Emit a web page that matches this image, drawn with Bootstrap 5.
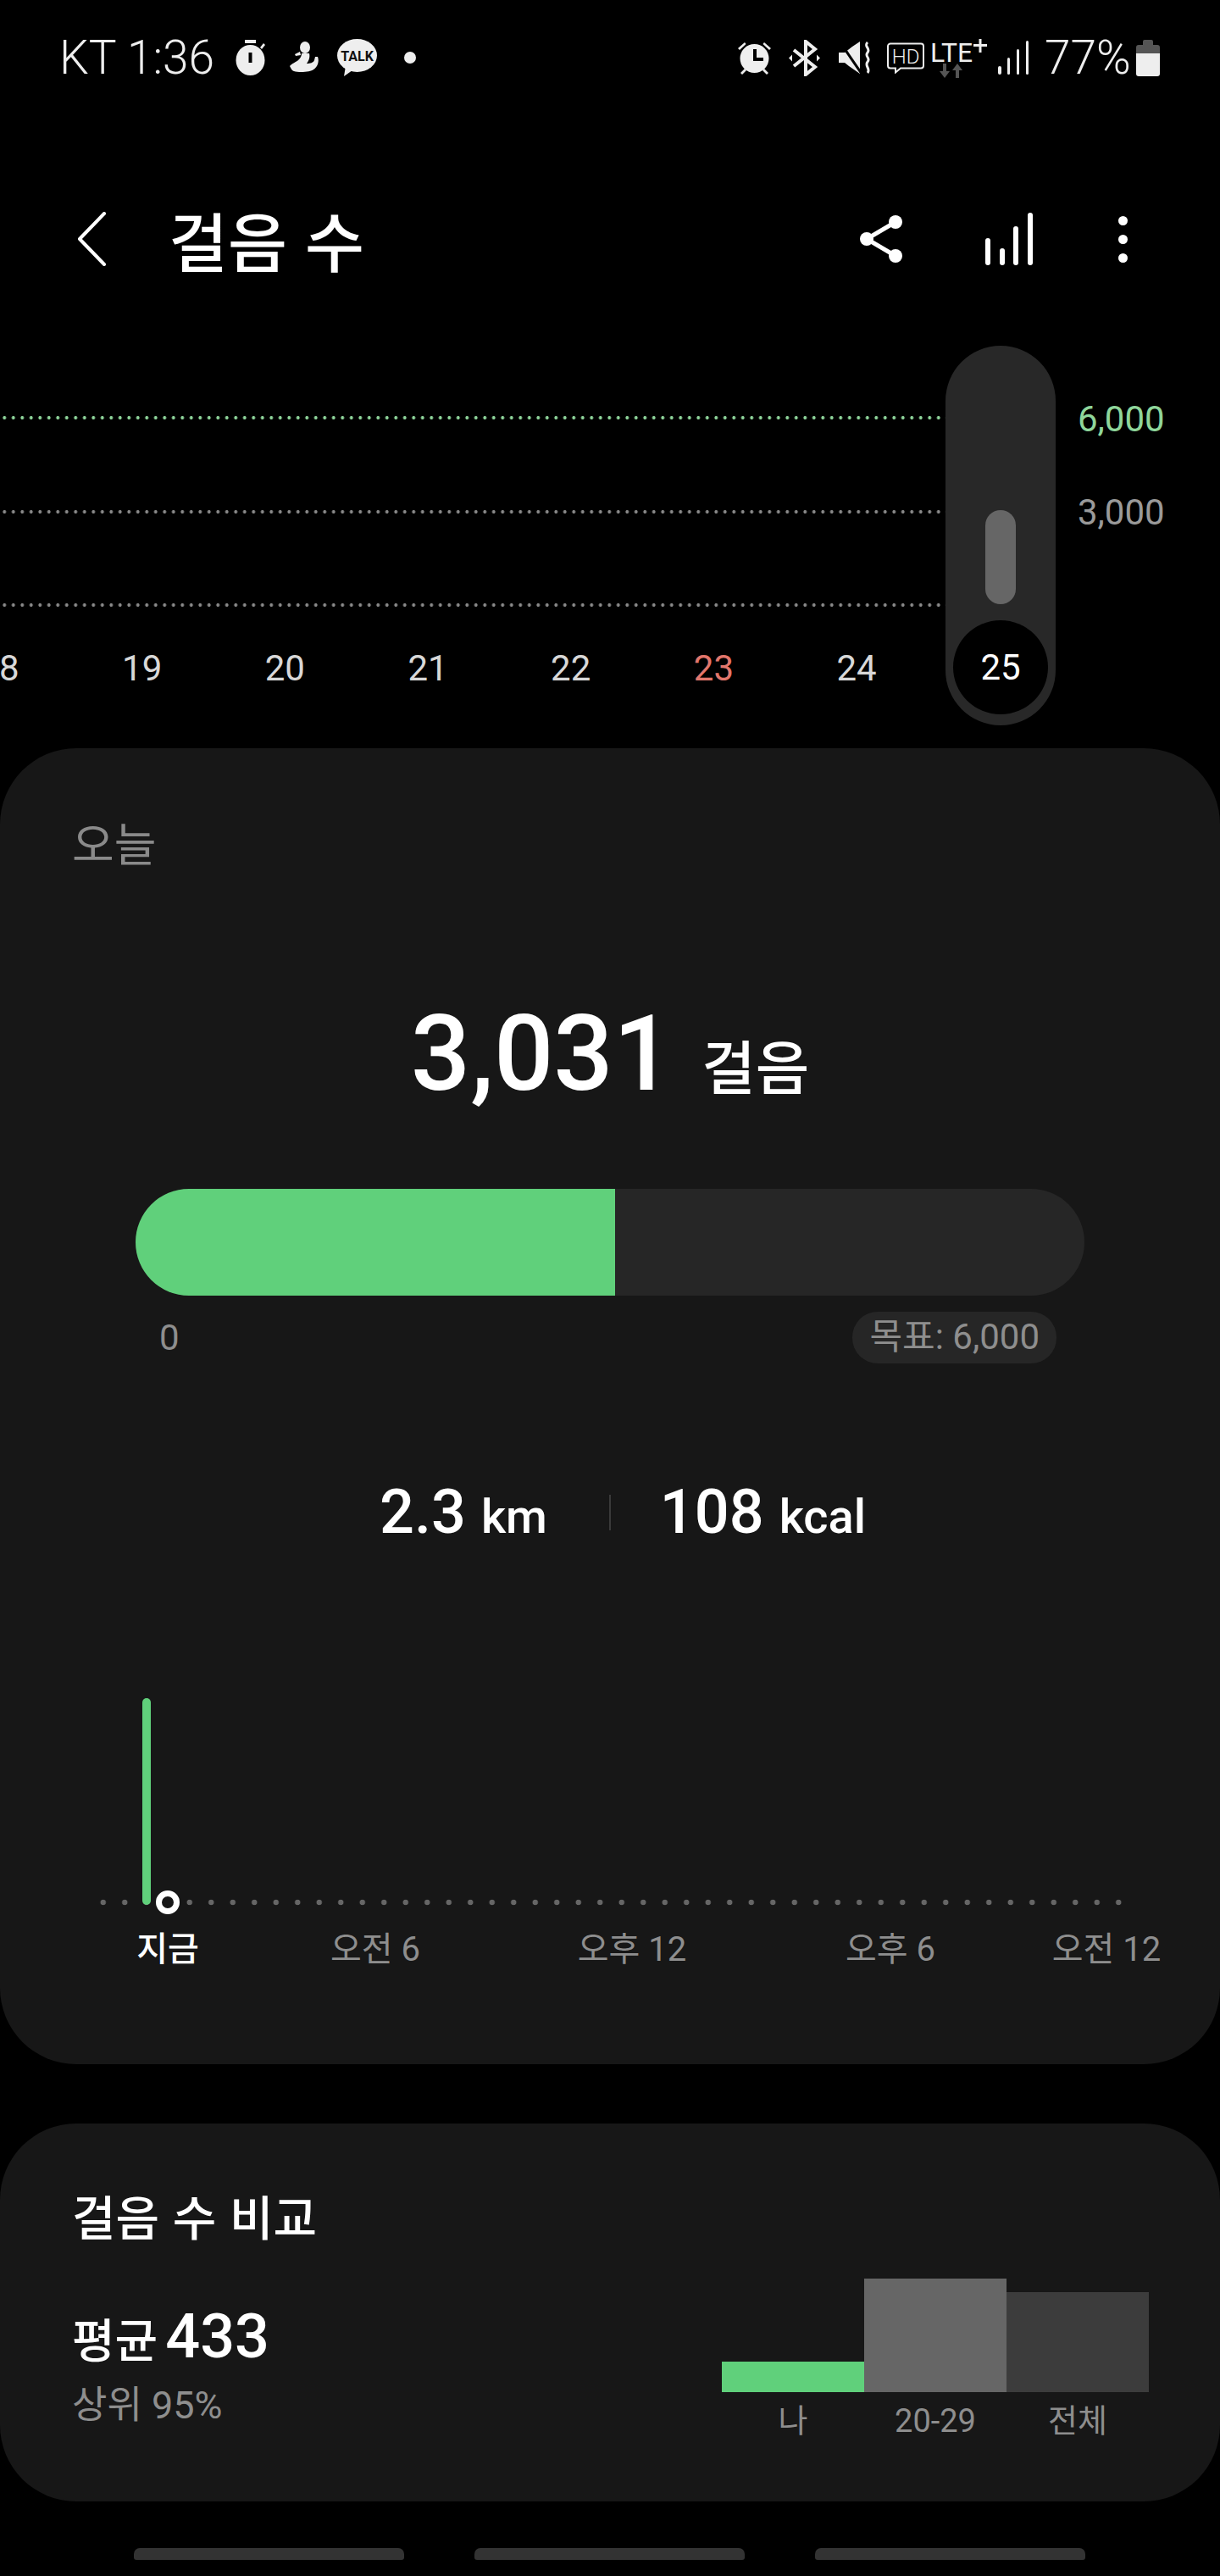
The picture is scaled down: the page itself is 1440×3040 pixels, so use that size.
<!DOCTYPE html>
<html lang="ko">

<head>
    <meta charset="UTF-8">
    <meta name="viewport" content="width=device-width, initial-scale=1.0">
    <title>걸음 수</title>
    <link href="https://cdn.jsdelivr.net/npm/bootstrap@5.3.3/dist/css/bootstrap.min.css" rel="stylesheet">
    <style>
        body {
            width: 1440px;
            height: 3040px;
            overflow: hidden;
            background: #000;
            color: #fff;
            font-family: Roboto, "Noto Sans CJK KR", sans-serif;
        }

        .kr {
            font-family: "Noto Sans CJK KR", Roboto, sans-serif;
        }

        /* status bar */
        .status-bar {
            height: 48px;
            margin-top: 44px;
            padding-left: 70px;
            color: #eee;
            font-weight: 300;
            font-size: 55px;
            line-height: 48px;
        }

        .status-time {
            width: 181px;
            white-space: nowrap;
        }

        .status-pct {
            width: 100px;
            margin-left: 18px;
            white-space: nowrap;
        }

        .ml-stop { margin-left: 27px; }
        .ml-person { margin-left: 28px; }
        .ml-talk { margin-left: 22px; }
        .ml-dot { margin-left: 32px; }
        .ml-alarm { margin-left: 379px; }
        .ml-bt { margin-left: 20px; }
        .ml-mute { margin-left: 22px; }
        .ml-hd { margin-left: 18px; }
        .ml-lte { margin-left: 7px; }
        .ml-signal { margin-left: 12px; }
        .ml-batt { margin-left: 8px; }

        /* app bar */
        .app-bar {
            height: 100px;
            margin-top: 140px;
            padding-left: 92px;
        }

        .app-title {
            margin-left: 74px;
            width: 816px;
            font-size: 76px;
            font-weight: 500;
            line-height: 100px;
            white-space: nowrap;
        }

        .ml-bars { margin-left: 98px; }
        .ml-more { margin-left: 101px; }

        /* week chart */
        .week-chart {
            height: 551px;
            padding-top: 141px;
        }

        .goal-row {
            height: 40px;
            margin-bottom: 70.5px;
        }

        .dot-line {
            width: 1116px;
            height: 4px;
            background: radial-gradient(circle, #8a8a8a 1.7px, transparent 2.2px) 0 0 / 10.5px 4px repeat-x;
        }

        .dot-line.is-goal {
            background-image: radial-gradient(circle, #8fd69b 1.7px, transparent 2.2px);
        }

        .axis-label {
            margin-left: 156px;
            padding-top: 3px;
            font-size: 42px;
            line-height: 40px;
            color: #9a9a9a;
        }

        .axis-label.is-goal {
            color: #8fd69b;
        }

        .day-row {
            margin-left: -85.4px;
            margin-top: -41px;
            font-size: 42px;
            line-height: 50px;
            color: #d8d8d8;
        }

        .day-cell {
            width: 168.7px;
            flex: none;
            text-align: center;
        }

        .day-red {
            color: #e2766c;
        }

        .day-pill {
            position: absolute;
            left: 1116px;
            top: 76px;
            width: 130px;
            height: 448px;
            padding-bottom: 13px;
            background: #282828;
            border-radius: 65px;
        }

        .day-pill-bar {
            width: 36px;
            height: 111px;
            background: #666;
            border-radius: 18px;
        }

        .day-pill-today {
            width: 112px;
            height: 111px;
            margin-top: 19px;
            background: #000;
            border-radius: 50%;
            font-size: 42px;
            line-height: 111px;
            text-align: center;
        }

        /* cards */
        .panel-card {
            background: #171717;
            border-radius: 90px;
        }

        .today-card {
            height: 1553px;
        }

        .compare-card {
            height: 446px;
            margin-top: 70px;
        }

        .today-label {
            padding: 81px 0 0 85px;
            font-size: 54px;
            line-height: 60px;
            color: #8a8a8a;
        }

        .total-row {
            height: 140px;
            margin-top: 150px;
            line-height: 140px;
        }

        .total-num {
            font-size: 124px;
            font-weight: 500;
        }

        .total-unit {
            margin-left: 34px;
            font-size: 69px;
            font-weight: 500;
        }

        .goal-track {
            height: 126px;
            margin: 89px 160px 0;
            border-radius: 63px;
            background: #262626;
            overflow: hidden;
        }

        .goal-fill {
            height: 100%;
            background: #60d07b;
        }

        .goal-meta {
            margin-top: 18px;
            padding: 0 193px 0 188px;
            color: #8e8e8e;
            font-size: 42px;
        }

        .goal-pill {
            height: 61px;
            padding: 0 20px;
            background: #262626;
            border-radius: 30px;
            line-height: 60px;
        }

        .stat-row {
            margin-top: 140px;
            height: 70px;
            padding-left: 30px;
            line-height: 70px;
            font-weight: 500;
        }

        .stat-num {
            font-size: 72px;
        }

        .stat-unit {
            margin-left: 18px;
            font-size: 56px;
        }

        .stat-sep {
            width: 2px;
            height: 42px;
            margin: 0 58px 0 73px;
            background: #3a3a3a;
            align-self: center;
        }

        .hour-chart {
            position: relative;
            height: 14px;
            margin: 418px 109px 0;
            background: radial-gradient(circle, #666 3px, transparent 3.6px) 0 0 / 25.5px 14px repeat-x;
        }

        .hour-bar {
            position: absolute;
            left: 59px;
            top: -234px;
            width: 10px;
            height: 244px;
            background: #60d07b;
            border-radius: 5px;
        }

        .hour-now {
            position: absolute;
            left: 75px;
            top: -7px;
            width: 28px;
            height: 28px;
            border: 7px solid #fff;
            border-radius: 50%;
            background: #171717;
        }

        .hour-labels {
            display: grid;
            grid-template-columns: 160px 330px 276px 334px 176px;
            margin: 20px 0 0 118px;
            color: #8e8e8e;
            font-size: 40px;
            line-height: 58px;
            text-align: center;
            white-space: nowrap;
        }

        .hour-labels .is-now {
            color: #fff;
            font-weight: 500;
        }

        .compare-title {
            padding: 72px 0 0 85px;
            font-size: 56px;
            font-weight: 500;
            line-height: 72px;
        }

        .compare-body {
            padding: 0 84px 0 85px;
        }

        .avg-row {
            margin-top: 68px;
            line-height: 80px;
            font-weight: 500;
        }

        .avg-label {
            font-size: 55px;
        }

        .avg-num {
            margin-left: 9px;
            font-size: 72px;
        }

        .rank-text {
            margin-top: 8px;
            color: #8e8e8e;
            font-size: 45px;
            line-height: 56px;
        }

        .bar-cols {
            margin-top: 39px;
            height: 134px;
        }

        .bar-col {
            width: 168px;
            height: 100%;
        }

        .bar-me { height: 36px; background: #60d07b; }
        .bar-age { height: 134px; background: #666; }
        .bar-all { height: 118px; background: #3c3c3c; }

        .bar-names {
            margin-top: 11px;
            color: #8e8e8e;
            font-size: 38px;
            line-height: 46px;
        }

        .bar-names div {
            width: 168px;
            text-align: center;
        }

        /* bottom handles */
        .nav-handles {
            margin-top: 55px;
            padding-left: 158px;
            gap: 83px;
        }

        .nav-handle {
            width: 319px;
            height: 14px;
            background: #333;
            border-radius: 7px 7px 3px 3px;
        }
    </style>
</head>

<body>
    <div class="status-bar d-flex align-items-center">
        <div class="status-time">KT 1:36</div>
        <svg class="ml-stop" width="35" height="42" viewBox="0 0 35 42" fill="#eee">
            <rect x="11" y="0" width="13" height="4" />
            <ellipse cx="17.5" cy="24" rx="17" ry="18" />
            <path d="M29 9l4-5 2 2-4 5z" />
            <rect x="15.5" y="15" width="4" height="12" fill="#000" />
        </svg>
        <svg class="ml-person" width="35" height="39" viewBox="0 0 35 39" fill="#eee">
            <ellipse cx="19" cy="7" rx="6" ry="7" />
            <path d="M13 12l-6 3 1 2 6-1zM15 14h9c1 4 0 8-3 12 4 0 8-1 9-4l1-4h3c2 5 0 12-5 15-3 3-17 4-23 2-2 0-4-4-5-6 2-3 8-5 10-7 3-3 4-5 4-8z" />
        </svg>
        <svg class="ml-talk" width="47" height="44" viewBox="0 0 47 44">
            <ellipse cx="23.5" cy="19.5" rx="23.5" ry="19.5" fill="#eee" />
            <path d="M8 44l2-12 8 5z" fill="#eee" />
            <text x="23.5" y="26" text-anchor="middle" font-family="Roboto, sans-serif" font-size="16" font-weight="700" fill="#111">TALK</text>
        </svg>
        <svg class="ml-dot" width="14" height="14" viewBox="0 0 14 14">
            <circle cx="7" cy="7" r="7" fill="#eee" />
        </svg>
        <svg class="ml-alarm" width="41" height="40" viewBox="0 0 41 40" fill="#eee">
            <circle cx="20.5" cy="21" r="17" />
            <path d="M1 9l8-7 1.500 2-7.500 7zM40 9l-8-7-1.500 2 7.500 7zM4 38l5-5 2 2-5 5zM37 38l-5-5-2 2 5 5z" />
            <path d="M19 10h4v10h8v4H19z" fill="#000" />
        </svg>
        <svg class="ml-bt" width="37" height="43" viewBox="0 0 37 43" fill="none" stroke="#eee" stroke-width="4">
            <path d="M6 12l25 20-11 9V2l11 9L6 31" />
            <path d="M0 21.500l4-4v8zM37 21.500l-4-4v8z" fill="#eee" stroke="none" />
        </svg>
        <svg class="ml-mute" width="39" height="38" viewBox="0 0 39 38">
            <path d="M0 13h7l9-7 9-6v38l-13-9-5-4H0z" fill="#eee" />
            <path d="M1 0l26 38" stroke="#000" stroke-width="3" />
            <path d="M34 1c-5 5 4 7 0 12s4 6 0 11 4 8 0 13" fill="none" stroke="#eee" stroke-width="3" />
        </svg>
        <svg class="ml-hd" width="44" height="37" viewBox="0 0 44 37">
            <path d="M4 1.500h36a3 3 0 0 1 3 3v23a3 3 0 0 1-3 3H16l-6 5v-5H4a3 3 0 0 1-3-3v-23a3 3 0 0 1 3-3z" fill="none" stroke="#eee" stroke-width="2" />
            <text x="22" y="25" text-anchor="middle" font-family="Roboto, sans-serif" font-size="24" fill="#eee">HD</text>
        </svg>
        <svg class="ml-lte" width="68" height="47" viewBox="0 0 68 47">
            <text x="0" y="28" font-family="Roboto, sans-serif" font-size="31" font-weight="400" fill="#eee" textLength="50" lengthAdjust="spacingAndGlyphs">LTE</text>
            <path d="M51 8.500h16M59 1v16" stroke="#eee" stroke-width="3" />
            <path d="M15 30h4v9h4l-6 8-6-8h4zM30 47h4v-9h4l-6-8-6 8h4z" fill="#555" />
        </svg>
        <svg class="ml-signal" width="37" height="40" viewBox="0 0 37 40" fill="#eee">
            <rect x="0" y="30" width="4" height="10" rx="2" />
            <rect x="11" y="20" width="3" height="20" rx="1.500" />
            <rect x="22" y="10" width="3" height="30" rx="1.500" />
            <rect x="33" y="0" width="3" height="40" rx="1.500" />
        </svg>
        <div class="status-pct">77%</div>
        <svg class="ml-batt" width="28" height="43" viewBox="0 0 28 43">
            <path d="M8 2a2 2 0 0 1 2-2h8a2 2 0 0 1 2 2v4h5a3 3 0 0 1 3 3v7H0V9a3 3 0 0 1 3-3h5z" fill="#555" />
            <path d="M0 16h28v24a3 3 0 0 1-3 3H3a3 3 0 0 1-3-3z" fill="#eee" />
        </svg>
    </div>

    <div class="app-bar d-flex align-items-center">
        <svg width="33" height="64" viewBox="0 0 33 64" fill="none" stroke="#fff" stroke-width="4" stroke-linecap="round" stroke-linejoin="round">
            <path d="M31 2L2 32l29 30" />
        </svg>
        <div class="app-title kr">걸음 수</div>
        <svg width="50" height="56" viewBox="0 0 50 56">
            <path d="M42 8L8 28l34 20" fill="none" stroke="#fff" stroke-width="5" />
            <circle cx="42" cy="8" r="8" fill="#fff" />
            <circle cx="8" cy="28" r="8" fill="#fff" />
            <circle cx="42" cy="48" r="8" fill="#fff" />
        </svg>
        <svg class="ml-bars" width="56" height="62" viewBox="0 0 56 62" fill="#fff">
            <rect x="0" y="30" width="6" height="32" rx="3" />
            <rect x="17" y="42" width="6" height="20" rx="3" />
            <rect x="33" y="16" width="6" height="46" rx="3" />
            <rect x="50" y="0" width="6" height="62" rx="3" />
        </svg>
        <svg class="ml-more" width="11" height="55" viewBox="0 0 11 55" fill="#fff">
            <circle cx="5.500" cy="5.500" r="5.500" />
            <circle cx="5.500" cy="27.500" r="5.500" />
            <circle cx="5.500" cy="49.500" r="5.500" />
        </svg>
    </div>

    <div class="week-chart position-relative">
        <div class="goal-row d-flex align-items-center">
            <div class="dot-line is-goal"></div>
            <div class="axis-label is-goal">6,000</div>
        </div>
        <div class="goal-row d-flex align-items-center">
            <div class="dot-line"></div>
            <div class="axis-label">3,000</div>
        </div>
        <div class="goal-row d-flex align-items-center">
            <div class="dot-line"></div>
        </div>
        <div class="day-row d-flex">
            <div class="day-cell">18</div>
            <div class="day-cell">19</div>
            <div class="day-cell">20</div>
            <div class="day-cell">21</div>
            <div class="day-cell">22</div>
            <div class="day-cell day-red">23</div>
            <div class="day-cell">24</div>
        </div>
        <div class="day-pill d-flex flex-column justify-content-end align-items-center">
            <div class="day-pill-bar"></div>
            <div class="day-pill-today">25</div>
        </div>
    </div>

    <div class="panel-card today-card">
        <div class="today-label kr">오늘</div>
        <div class="total-row d-flex justify-content-center align-items-baseline">
            <span class="total-num">3,031</span>
            <span class="total-unit kr">걸음</span>
        </div>
        <div class="goal-track">
            <div class="goal-fill" style="width: 50.5%"></div>
        </div>
        <div class="goal-meta d-flex justify-content-between align-items-center">
            <span>0</span>
            <span class="goal-pill">목표: 6,000</span>
        </div>
        <div class="stat-row d-flex justify-content-center align-items-baseline">
            <span class="stat-num">2.3</span>
            <span class="stat-unit">km</span>
            <span class="stat-sep"></span>
            <span class="stat-num">108</span>
            <span class="stat-unit">kcal</span>
        </div>
        <div class="hour-chart">
            <div class="hour-bar"></div>
            <div class="hour-now"></div>
        </div>
        <div class="hour-labels">
            <div class="is-now">지금</div>
            <div>오전 6</div>
            <div>오후 12</div>
            <div>오후 6</div>
            <div>오전 12</div>
        </div>
    </div>

    <div class="panel-card compare-card">
        <div class="compare-title kr">걸음 수 비교</div>
        <div class="compare-body d-flex justify-content-between">
            <div>
                <div class="avg-row d-flex align-items-baseline">
                    <span class="avg-label">평균</span>
                    <span class="avg-num">433</span>
                </div>
                <div class="rank-text">상위 95%</div>
            </div>
            <div>
                <div class="bar-cols d-flex">
                    <div class="bar-col d-flex align-items-end"><div class="bar-me w-100"></div></div>
                    <div class="bar-col d-flex align-items-end"><div class="bar-age w-100"></div></div>
                    <div class="bar-col d-flex align-items-end"><div class="bar-all w-100"></div></div>
                </div>
                <div class="bar-names d-flex">
                    <div>나</div>
                    <div>20-29</div>
                    <div>전체</div>
                </div>
            </div>
        </div>
    </div>

    <div class="nav-handles d-flex">
        <div class="nav-handle"></div>
        <div class="nav-handle"></div>
        <div class="nav-handle"></div>
    </div>

    <script src="https://cdn.jsdelivr.net/npm/bootstrap@5.3.3/dist/js/bootstrap.bundle.min.js"></script>
</body>

</html>
